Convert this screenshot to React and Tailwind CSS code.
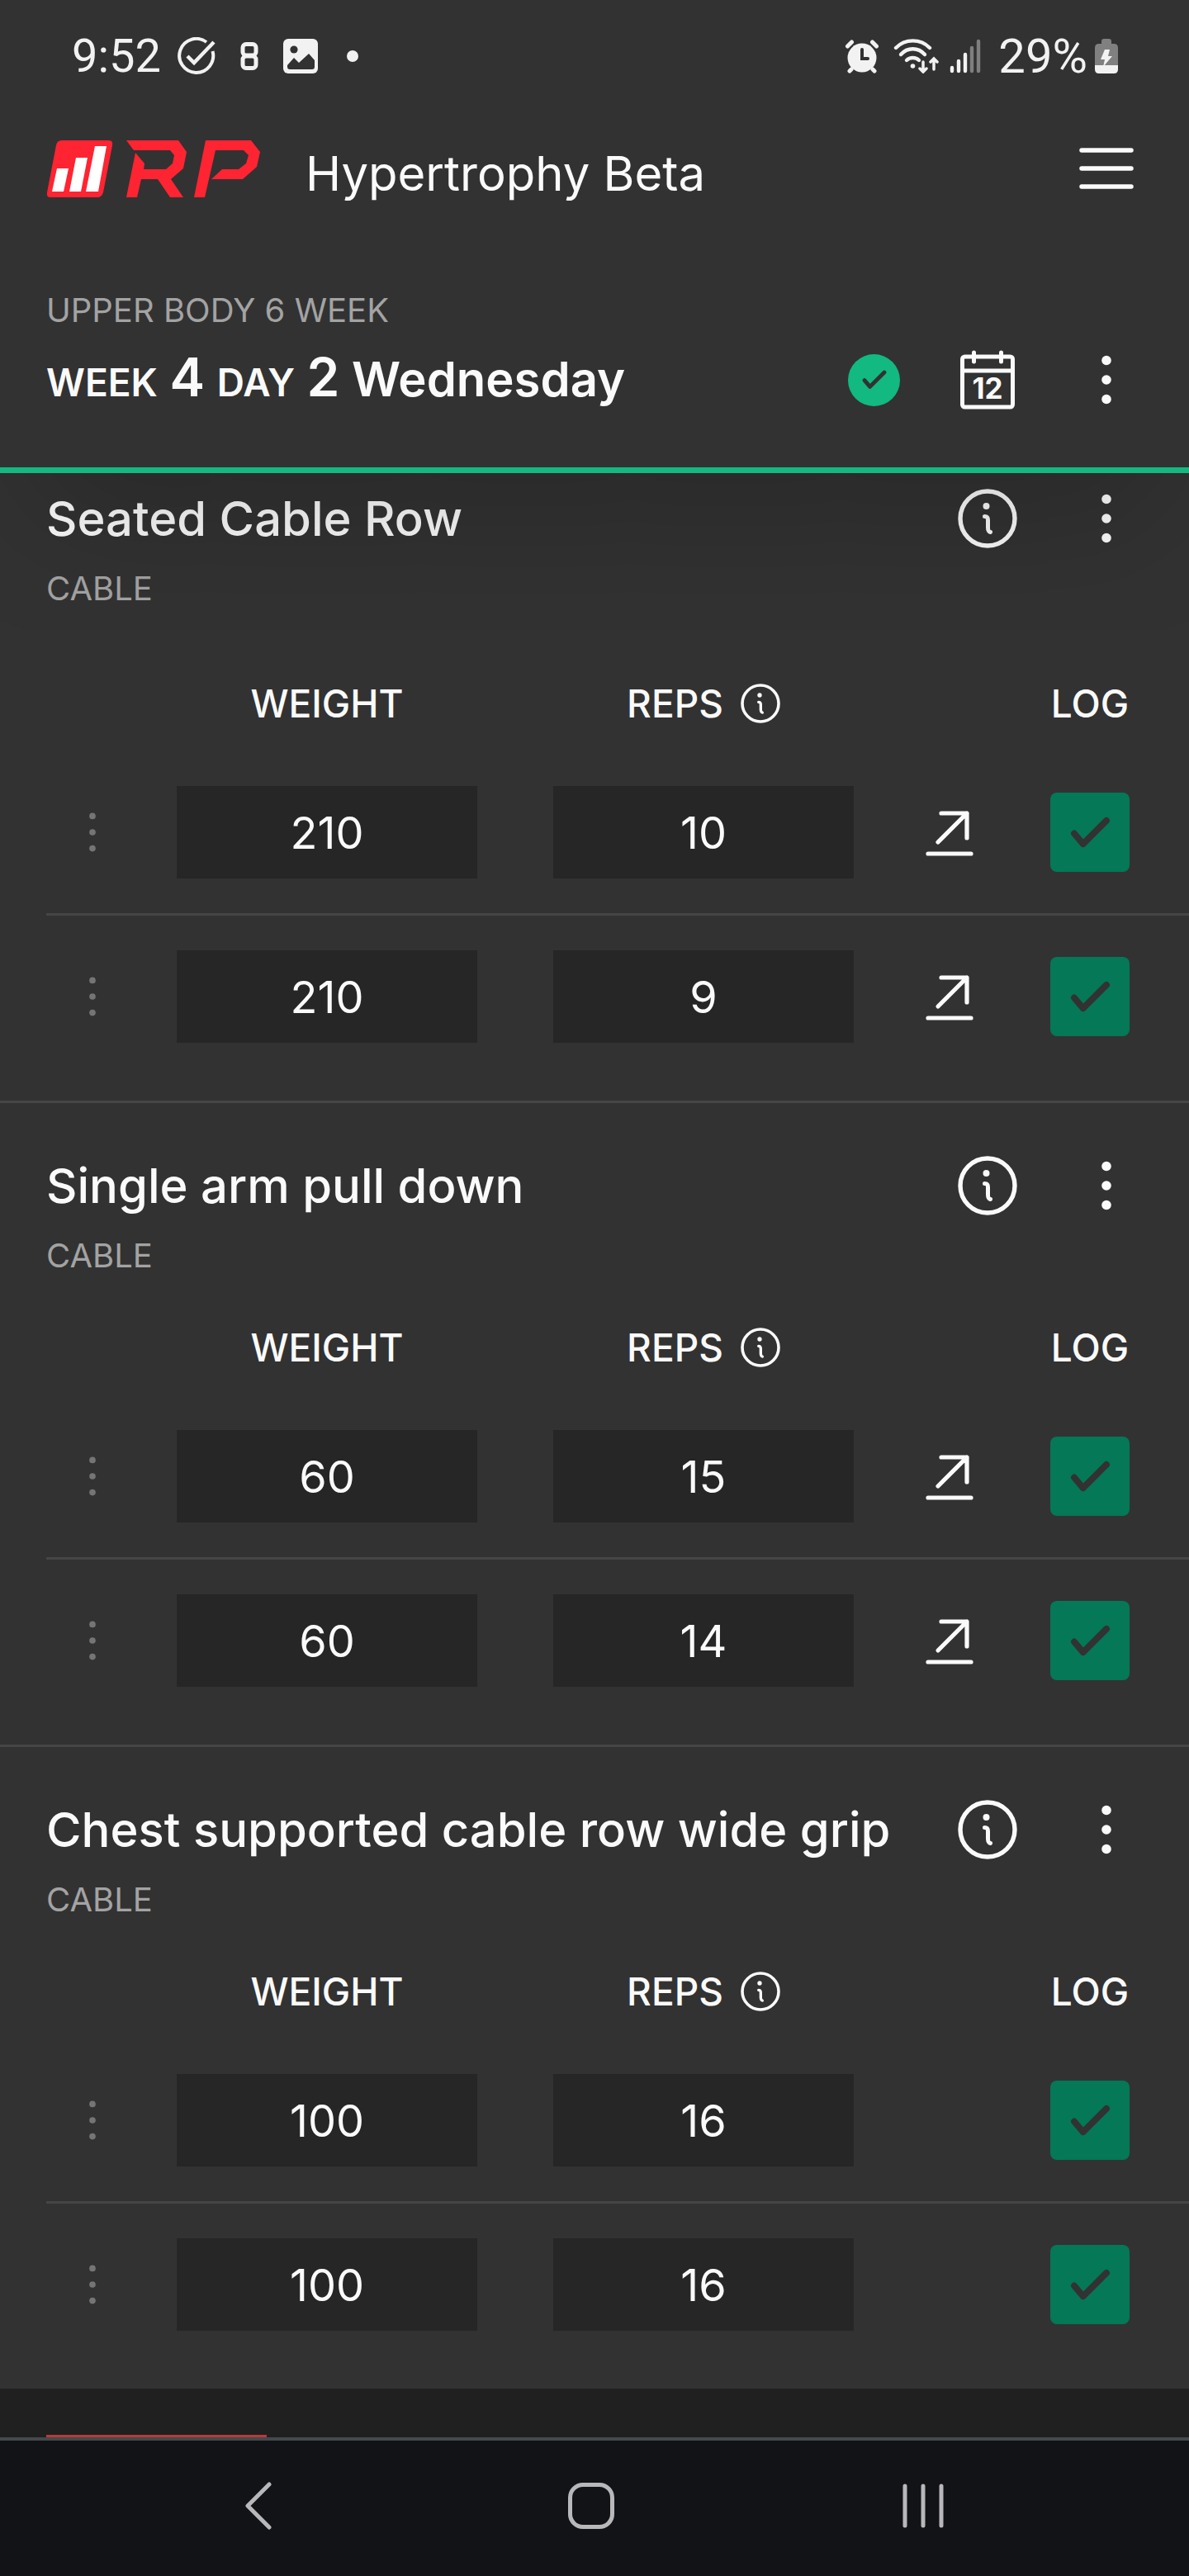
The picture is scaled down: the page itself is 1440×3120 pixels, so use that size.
import { useState } from 'react'

const EXERCISES = [
  {
    name: 'Seated Cable Row',
    type: 'CABLE',
    sets: [
      { weight: '210', reps: '10', up: true },
      { weight: '210', reps: '9', up: true },
    ],
  },
  {
    name: 'Single arm pull down',
    type: 'CABLE',
    sets: [
      { weight: '60', reps: '15', up: true },
      { weight: '60', reps: '14', up: true },
    ],
  },
  {
    name: 'Chest supported cable row wide grip',
    type: 'CABLE',
    sets: [
      { weight: '100', reps: '16', up: false },
      { weight: '100', reps: '16', up: false },
    ],
  },
]

function Dots({ className, r = 5.8 }) {
  return (
    <svg viewBox="0 0 12 60" className={className} fill="currentColor" aria-hidden="true">
      <circle cx="6" cy="6.5" r={r} />
      <circle cx="6" cy="30" r={r} />
      <circle cx="6" cy="53.5" r={r} />
    </svg>
  )
}

function InfoIcon({ className }) {
  return (
    <svg viewBox="0 0 72 72" className={className} fill="none" stroke="currentColor" strokeLinecap="round" aria-hidden="true">
      <circle cx="36" cy="36" r="33" strokeWidth="5.4" />
      <circle cx="34.5" cy="21" r="4" fill="currentColor" stroke="none" />
      <path d="M32.5 33.5 C35.5 33.5 36.5 35 36.5 38 V47 C36.5 51 37.5 52 39.5 52.5" strokeWidth="5" />
    </svg>
  )
}

function Check({ className, strokeWidth }) {
  return (
    <svg viewBox="0 0 50 40" className={className} fill="none" stroke="currentColor" strokeWidth={strokeWidth} strokeLinecap="round" strokeLinejoin="round" aria-hidden="true">
      <path d="M5 21 L16 34 L45 5" />
    </svg>
  )
}

function Logo() {
  return (
    <svg viewBox="0 0 260 71" className="h-[71px] w-[260px] shrink-0" role="img" aria-label="RP">
      <g fill="#ff2432">
        <path d="M19 1 H76 Q81 1 80 7 L69 64 Q67 70 62 70 H5 Q0 70 1 64 L12 7 Q13 1 19 1Z" />
        <path d="M97 1 H160 L170 15 L166 35 L151 48 L166 70 H150 L135 48 H115 L110 70 H97 L108 16 L119 29 L118 36 H145 L153 29 L155 19 L150 13 H106Z" />
        <path d="M193 1 H248 L259 15 L255 33 L238 48 H200 L213 36 H233 L242 29 L245 19 L239 13 H205 L192 70 H179Z" />
      </g>
      <path d="M13 35 H27 L21 63 H7Z M36 22 H50 L42 63 H28Z M59 8 H73 L63 63 H48Z" fill="#fff" />
    </svg>
  )
}

function StatusBar() {
  return (
    <div className="flex h-[136px] items-center justify-between pl-[87px] pr-[86px] font-[Roboto,sans-serif] text-[56px] leading-none text-[#f2f2f2]">
      <div className="flex items-center">
        <span>9:52</span>
        <svg viewBox="0 0 46 46" className="ml-[20px] size-[46px]" fill="none" stroke="currentColor" strokeWidth="4" aria-hidden="true">
          <path d="M35 6 A20.5 20.5 0 1 0 42.5 17" />
          <path d="M12 23 L20 31 L44 6" strokeWidth="4.5" />
        </svg>
        <svg viewBox="0 0 22 34" className="ml-[30px] h-[34px] w-[22px]" fill="none" stroke="currentColor" strokeWidth="5" aria-hidden="true">
          <rect x="3" y="2.5" width="16" height="13.5" rx="4" />
          <rect x="3" y="17" width="16" height="14.5" rx="4" />
        </svg>
        <svg viewBox="0 0 42 42" className="ml-[30px] size-[42px]" fill="currentColor" aria-hidden="true">
          <rect width="42" height="42" rx="6" />
          <circle cx="13" cy="13" r="4.6" fill="#323232" />
          <path d="M5 32 L13 23 L19 29 L31 18 L38 26 V34 Q38 37 35 37 H8 Q5 37 5 34Z" fill="#323232" />
        </svg>
        <span className="ml-[35px] size-[14px] rounded-full bg-[#f2f2f2]" />
      </div>
      <div className="flex items-center">
        <svg viewBox="0 0 42 42" className="size-[42px]" fill="currentColor" stroke="currentColor" strokeLinecap="round" aria-hidden="true">
          <circle cx="21" cy="23" r="17.5" stroke="none" />
          <path d="M3.5 9 L8.5 4 M38.5 9 L33.5 4 M8 37 L6 39 M34 37 L36 39" strokeWidth="5" />
          <path d="M21 13 V24 H28" fill="none" stroke="#323232" strokeWidth="4" />
        </svg>
        <svg viewBox="0 0 56 42" className="ml-[17px] h-[42px] w-[56px]" fill="none" stroke="currentColor" strokeWidth="4.4" strokeLinecap="round" aria-hidden="true">
          <path d="M3 11 C14 -0.5 33 -0.5 44 11" />
          <path d="M9 19 C17 10 30 10 38 19" />
          <path d="M16 26 C20 22 27 22 31 26" />
          <circle cx="23.5" cy="33" r="2.8" fill="currentColor" stroke="none" />
          <path d="M36 28 V39 M32 36 L36 40 L40 36 M49 37 V25 M45 28 L49 24 L53 28" strokeWidth="3.5" />
        </svg>
        <svg viewBox="0 0 38 42" className="ml-[12px] h-[42px] w-[38px]" stroke="currentColor" strokeWidth="4.4" strokeLinecap="round" aria-hidden="true">
          <path d="M3 35 V39 M11 27 V39 M19 19 V39" />
          <path d="M27 11 V39 M35 3 V39" opacity="0.4" />
        </svg>
        <span className="ml-[21px] text-[58px]">29%</span>
        <svg viewBox="0 0 28 42" className="ml-[9px] h-[42px] w-[28px]" aria-hidden="true">
          <path d="M8 6 V3 Q8 0 11 0 H17 Q20 0 20 3 V6 H23 Q28 6 28 11 V32 H0 V11 Q0 6 5 6Z" fill="#808080" />
          <path d="M0 32 H28 V37 Q28 42 23 42 H5 Q0 42 0 37Z" fill="#f2f2f2" />
          <path d="M12 13 H18 L16 21 H21 L10 34 L12 25 H7Z" fill="#f2f2f2" />
        </svg>
      </div>
    </div>
  )
}

function Header() {
  return (
    <header className="relative z-10 shrink-0 border-b-[7px] border-[#12b981] bg-[#323232] shadow-[0_88px_175px_-42px_rgba(0,0,0,0.2)]">
      <StatusBar />
      <div className="flex h-[136px] items-center pl-14 pr-[52px]">
        <Logo />
        <div className="flex-1 pl-[54px] pt-3 text-[58px] leading-[72px]">Hypertrophy Beta</div>
        <button className="grid size-24 place-items-center" aria-label="Menu">
          <svg viewBox="0 0 66 50" className="h-[50px] w-[66px]" stroke="currentColor" strokeWidth="5.5" strokeLinecap="round" aria-hidden="true">
            <path d="M3 3 H63 M3 25 H63 M3 47 H63" />
          </svg>
        </button>
      </div>
      <div className="pb-[58px] pl-14 pr-[52px] pt-[74px]">
        <div className="text-[40px] leading-[60px] text-[#a3a3a3]">UPPER BODY 6 WEEK</div>
        <div className="mt-1.5 flex h-24 items-center gap-12">
          <h1 className="flex-1 whitespace-nowrap text-[58px] font-semibold leading-[88px]">
            <span className="text-[46px]">WEEK</span> <span className="text-[64px]">4</span>{' '}
            <span className="text-[46px]">DAY</span> <span className="text-[64px]">2</span> Wednesday
          </h1>
          <span className="mr-[10px] grid size-[63px] place-items-center rounded-full bg-[#12b981] text-[#323232]">
            <Check className="h-[24px] w-[30px]" strokeWidth="8" />
          </span>
          <button className="grid size-24 place-items-center" aria-label="Calendar">
            <svg viewBox="0 0 66 72" className="h-[72px] w-[66px]" fill="none" stroke="currentColor" strokeWidth="5" strokeLinecap="round" aria-hidden="true">
              <rect x="2.5" y="8" width="61" height="61" rx="3" />
              <path d="M3 25 H63 M16.5 3 V14 M49.5 3 V14" />
              <text x="33" y="59" textAnchor="middle" fontSize="35" fontWeight="700" fill="currentColor" stroke="none">12</text>
            </svg>
          </button>
          <button className="grid size-24 place-items-center" aria-label="Workout options">
            <Dots className="h-[60px] w-[12px]" />
          </button>
        </div>
      </div>
    </header>
  )
}

function SetRow({ set, label, last }) {
  const [logged, setLogged] = useState(true)
  return (
    <tr className={last ? '' : 'border-b-[3px] border-[#464646]'}>
      <td>
        <button className="mx-auto grid size-14 place-items-center text-[#757575]" aria-label={`${label} options`}>
          <Dots className="h-[52px] w-[10px]" r={4.6} />
        </button>
      </td>
      <td className="px-[46px] py-[42px]">
        <input
          type="text"
          defaultValue={set.weight}
          aria-label={`${label} weight`}
          className="block h-28 w-full bg-[#262626] text-center text-[54px] outline-none"
        />
      </td>
      <td className="px-[46px] py-[42px]">
        <input
          type="text"
          defaultValue={set.reps}
          aria-label={`${label} reps`}
          className="block h-28 w-full bg-[#262626] text-center text-[54px] outline-none"
        />
      </td>
      <td>
        {set.up && (
          <svg viewBox="0 0 58 58" className="mx-auto size-[58px]" fill="none" stroke="currentColor" strokeWidth="5.2" strokeLinecap="round" strokeLinejoin="round" aria-hidden="true">
            <path d="M19 6 H50 V36 M50 6 L15 41 M3 55 H55" />
          </svg>
        )}
      </td>
      <td className="pr-5">
        <label className="relative mx-auto grid size-24 place-items-center">
          <input
            type="checkbox"
            checked={logged}
            onChange={e => setLogged(e.target.checked)}
            aria-label={`${label} log`}
            className="size-24 appearance-none rounded-lg bg-[#525252] checked:bg-[#047857]"
          />
          {logged && (
            <span className="pointer-events-none absolute inset-0 grid place-items-center text-[#323232]">
              <Check className="h-[39px] w-[49px]" strokeWidth="8" />
            </span>
          )}
        </label>
      </td>
    </tr>
  )
}

function Exercise({ exercise, first, last }) {
  const { name, type, sets } = exercise
  return (
    <section className={`bg-[#323232] pb-7 ${first ? 'pt-[11px]' : 'pt-14'} ${last ? '' : 'border-b-[3px] border-[#464646]'}`}>
      <div className="flex h-[88px] items-center gap-12 pl-14 pr-[52px]">
        <h2 className="min-w-0 flex-1 whitespace-nowrap text-[58px] font-medium leading-[72px]">{name}</h2>
        <button className="grid size-24 shrink-0 place-items-center" aria-label={`About ${name}`}>
          <InfoIcon className="size-[72px]" />
        </button>
        <button className="grid size-24 shrink-0 place-items-center" aria-label={`${name} options`}>
          <Dots className="h-[60px] w-[12px]" />
        </button>
      </div>
      <div className="mt-3 pl-14 text-[40px] leading-[58px] text-[#a3a3a3]">{type}</div>
      <div className={first ? 'pl-14 pt-[74px]' : 'pl-14 pt-[46px]'}>
        <table className="w-full table-fixed">
          <thead>
            <tr className="h-[94px] align-top text-[46px] leading-[72px]">
              <td className="w-28" />
              <th className="font-medium">WEIGHT</th>
              <th className="font-medium">
                <span className="flex items-center justify-center gap-[21px]">
                  REPS
                  <button aria-label="About reps">
                    <InfoIcon className="size-12" />
                  </button>
                </span>
              </th>
              <td className="w-[140px]" />
              <th className="w-[220px] pr-5 font-medium">LOG</th>
            </tr>
          </thead>
          <tbody>
            {sets.map((s, i) => (
              <SetRow key={i} set={s} label={`${name} set ${i + 1}`} last={i === sets.length - 1} />
            ))}
          </tbody>
        </table>
      </div>
    </section>
  )
}

function NavBar() {
  return (
    <nav className="flex h-[168px] shrink-0 items-center justify-between border-t-4 border-[#45494d] bg-[#111317] pb-1.5 pl-[265px] pr-[274px] text-[#b8b8ba]">
      <button className="grid size-24 place-items-center" aria-label="Back">
        <svg viewBox="0 0 34 58" className="h-[58px] w-[34px]" fill="none" stroke="currentColor" strokeWidth="5" strokeLinecap="round" strokeLinejoin="round" aria-hidden="true">
          <path d="M30 3 L4 29 L30 55" />
        </svg>
      </button>
      <button className="grid size-24 place-items-center" aria-label="Home">
        <span className="size-[56px] rounded-[18px] border-[5px] border-[#b8b8ba]" />
      </button>
      <button className="grid size-24 place-items-center" aria-label="Recent apps">
        <svg viewBox="0 0 50 54" className="h-[54px] w-[50px]" stroke="currentColor" strokeWidth="5" strokeLinecap="round" aria-hidden="true">
          <path d="M3 3 V51 M25 3 V51 M47 3 V51" />
        </svg>
      </button>
    </nav>
  )
}

export default function App() {
  return (
    <div className="flex h-screen flex-col overflow-hidden bg-[#202020] font-[Inter,sans-serif] text-[#fafafa]">
      <Header />
      <main className="min-h-0 flex-1 overflow-hidden">
        {EXERCISES.map((ex, i) => (
          <Exercise key={ex.name} exercise={ex} first={i === 0} last={i === EXERCISES.length - 1} />
        ))}
        <div className="px-14 pt-14">
          <button className="block h-28 w-[267px] border-[3px] border-[#b93a3a]" aria-label="Add exercise" />
        </div>
      </main>
      <NavBar />
    </div>
  )
}
